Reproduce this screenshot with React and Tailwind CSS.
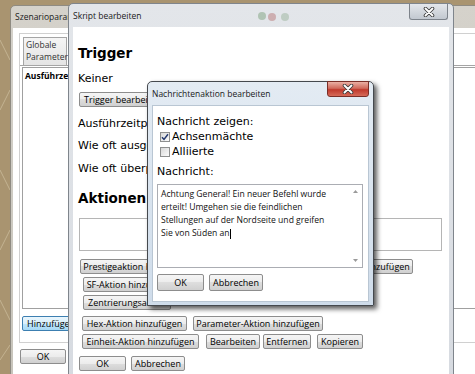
import React from 'react';

const ui = "font-['Open_Sans',sans-serif]";
const lbl = "font-['DejaVu_Sans',sans-serif]";

const Btn = ({ children, className = '', focused, tall }) => (
    <div
        className={`${tall ? 'h-[17px]' : 'h-[15px]'} shrink-0 flex items-center justify-center rounded-[2px] border ${focused
            ? 'border-[#3c7fb1] bg-[linear-gradient(#eaf6fd,#d9f0fc_50%,#bee6fd_50%,#a7d9f5)]'
            : 'border-[#8d8d8d] bg-[linear-gradient(#f5f5f5,#ececec_50%,#dedede_50%,#d0d0d0)]'
            } ${ui} text-[9px] text-black leading-none whitespace-nowrap overflow-hidden ${className}`}
    >
        {children}
    </div>
);

const Check = ({ checked }) => (
    <span className="w-[10px] h-[10px] shrink-0 border border-[#8e8f8f] bg-[linear-gradient(135deg,#d8d8d8,#fbfbfb)] flex items-center justify-center">
        {checked && (
            <svg width="8" height="8" viewBox="0 0 8 8">
                <path d="M1 4.2 L3 6.4 L7 1.2" stroke="#24386e" strokeWidth="1.5" fill="none" />
            </svg>
        )}
    </span>
);

const CloseX = () => (
    <svg width="12" height="10" viewBox="0 0 12 10">
        <path d="M2.5 1.5 L9.5 8.5 M9.5 1.5 L2.5 8.5" stroke="#3a3a3a" strokeWidth="3.6" strokeLinecap="round" />
        <path d="M2.5 1.5 L9.5 8.5 M9.5 1.5 L2.5 8.5" stroke="#ffffff" strokeWidth="1.9" strokeLinecap="round" />
    </svg>
);

export default function App() {
    return (
        <div className="relative w-[475px] h-[374px] overflow-hidden bg-[#a99470]">
            {/* Desktop pattern */}
            <svg className="absolute inset-0" width="475" height="374">
                <path d="M0 40 L10 60 M0 110 L10 90 M0 170 L10 190 M0 250 L10 230 M0 300 L10 320 M0 360 L10 345" stroke="#d6c8a8" strokeWidth="1" opacity="0.6" />
            </svg>

            {/* Szenarioparameter window */}
            <div className="absolute left-[10px] top-[5px] w-[490px] h-[400px] flex flex-col rounded-tl-[5px] border border-[#8f8b82] bg-[linear-gradient(#d5d2cb,#c6c3ba)] pl-[2px]">
                <div className={`h-[22px] flex items-center pl-[2px] ${ui} text-[8.5px] text-[#1a1a1a]`}>Szenarioparameter</div>
                <div className="flex-1 bg-white flex flex-col pl-[6px]">
                    <div className="mt-[5px] h-[310px] border border-[#d0d0d0] flex flex-col">
                        <div className="flex pl-[3px] pt-[3px]">
                            <div className={`w-[44px] h-[28px] border border-b-0 border-[#a5a5a5] bg-[linear-gradient(#f5f5f5,#e4e4e4)] px-[2px] pt-[1px] ${ui} text-[8.5px] leading-[12px] text-[#333]`}>
                                Globale Parameter
                            </div>
                        </div>
                        <div className="flex-1 border-t border-[#a5a5a5] flex flex-col pl-[2px]">
                            <div className="mt-[1px] h-[242px] border border-[#a0a0a0] px-[2px] pt-[2px]">
                                <div className={`${ui} font-bold text-[8.5px] leading-[12px] text-black`}>Ausführzeitpunkt</div>
                            </div>
                            <div className="mt-[7px] flex">
                                <Btn focused className="w-[62px] justify-start pl-[4px]">Hinzufügen</Btn>
                            </div>
                        </div>
                    </div>
                    <div className="mt-[6px] flex">
                        <Btn className="w-[46px] ml-[1px]">OK</Btn>
                    </div>
                </div>
            </div>

            {/* Skript bearbeiten window */}
            <div className="absolute left-[68px] top-[3px] w-[386px] h-[390px] flex flex-col rounded-t-[5px] border border-[#7f858c] bg-[linear-gradient(#e3e6ea,#d6dae0)] px-[4px]">
                <div className="h-[23px] shrink-0 flex items-start justify-between relative">
                    <div className={`mt-[6px] ${ui} text-[8.5px] text-[#1a1a1a]`}>Skript bearbeiten</div>
                    <div className="absolute left-[185px] top-[8px] w-[8px] h-[8px] rounded-full bg-[#7da27d] opacity-50" />
                    <div className="absolute left-[195px] top-[9px] w-[8px] h-[8px] rounded-full bg-[#b87878] opacity-50" />
                    <div className="absolute left-[208px] top-[9px] w-[8px] h-[8px] rounded-full bg-[#8aa88a] opacity-40" />
                    <div className="w-[39px] h-[16px] mr-[1px] rounded-b-[3px] border border-t-0 border-[#7d838b] bg-[linear-gradient(#e4e7eb,#c2c8d0)] flex items-center justify-center">
                        <CloseX />
                    </div>
                </div>
                <div className={`flex-1 bg-white flex flex-col pl-[5px] ${lbl} text-black`}>
                    <div className="mt-[18px] h-[16px] leading-[16px] text-[13.5px] font-bold">Trigger</div>
                    <div className="mt-[11px] h-[14px] leading-[14px] text-[11px]">Keiner</div>
                    <div className="mt-[6px] flex">
                        <Btn className="w-[110px] ml-[1px] justify-start pl-[4px]">Trigger bearbeiten</Btn>
                    </div>
                    <div className="mt-[10px] h-[14px] leading-[14px] text-[11px]">Ausführzeitpunkt: Zugbeginn</div>
                    <div className="mt-[8px] h-[14px] leading-[14px] text-[11px]">Wie oft ausgeführt: Einmal</div>
                    <div className="mt-[9px] h-[14px] leading-[14px] text-[11px]">Wie oft überprüft: Einmal</div>
                    <div className="mt-[14px] h-[16px] leading-[16px] text-[13.5px] font-bold">Aktionen</div>
                    <div className="mt-[12px] ml-[1px] w-[363px] h-[33px] shrink-0 border border-[#b5b5b5]" />
                    <div className="mt-[8px] ml-[2px] flex gap-[4px]">
                        <Btn className="w-[116px]">Prestigeaktion hinzufügen</Btn>
                        <Btn className="w-[110px]">Textaktion hinzufügen</Btn>
                        <Btn className="w-[99px]">Siegaktion hinzufügen</Btn>
                    </div>
                    <div className="mt-[3px] ml-[5px] flex">
                        <Btn className="w-[96px]">SF-Aktion hinzufügen</Btn>
                    </div>
                    <div className="mt-[3px] ml-[5px] flex">
                        <Btn className="w-[88px] justify-start pl-[4px]">Zentrierungsaktion</Btn>
                    </div>
                    <div className="mt-[6px] ml-[4px] flex gap-[6px]">
                        <Btn className="w-[105px]">Hex-Aktion hinzufügen</Btn>
                        <Btn className="w-[130px]">Parameter-Aktion hinzufügen</Btn>
                    </div>
                    <div className="mt-[3px] ml-[4px] flex">
                        <Btn className="w-[117px]">Einheit-Aktion hinzufügen</Btn>
                        <Btn className="w-[54px] ml-[7px]">Bearbeiten</Btn>
                        <Btn className="w-[48px] ml-[3px]">Entfernen</Btn>
                        <Btn className="w-[46px] ml-[6px]">Kopieren</Btn>
                    </div>
                    <div className="mt-[7px] ml-[1px] flex gap-[5px]">
                        <Btn className="w-[47px]">OK</Btn>
                        <Btn className="w-[54px]">Abbrechen</Btn>
                    </div>
                </div>
            </div>

            {/* Nachrichtenaktion bearbeiten dialog */}
            <div className="absolute z-10 left-[147px] top-[81px] bottom-[68px] w-[227px] flex flex-col rounded-t-[5px] border border-[#45494e] bg-[linear-gradient(#e3ebf3,#cfdcea)] px-[4px] shadow-[3px_3px_5px_rgba(0,0,0,0.65)]">
                <div className="h-[23px] shrink-0 flex items-start justify-between">
                    <div className={`mt-[6px] ${ui} text-[8.5px] text-[#1a1a1a]`}>Nachrichtenaktion bearbeiten</div>
                    <div className="w-[42px] h-[16px] mt-[-1px] rounded-b-[3px] border border-[#7a2e27] bg-[linear-gradient(#eab0a4,#d06a5c_45%,#c0392c_55%,#d66a58)] flex items-center justify-center">
                        <CloseX />
                    </div>
                </div>
                <div className={`flex-1 bg-white border border-[#b9c6d3] flex flex-col pl-[4px] ${lbl} text-[11px] text-black`}>
                    <div className="mt-[9px] h-[14px] shrink-0 leading-[14px]">Nachricht zeigen:</div>
                    <div className="mt-[1px] h-[14px] shrink-0 flex items-center gap-[2px] pl-[3px]">
                        <Check checked />
                        <span className="leading-[14px]">Achsenmächte</span>
                    </div>
                    <div className="mt-[1px] h-[14px] shrink-0 flex items-center gap-[2px] pl-[3px]">
                        <Check />
                        <span className="leading-[14px]">Alliierte</span>
                    </div>
                    <div className="mt-[6px] h-[14px] shrink-0 leading-[14px]">Nachricht:</div>
                    <div className="mt-[5px] w-[206px] h-[84px] shrink-0 border border-[#abadb3] flex">
                        <div className={`flex-1 pl-[3px] pt-[3px] ${ui} text-[8.6px] leading-[13px] text-[#111]`}>
                            <div>Achtung General! Ein neuer Befehl wurde</div>
                            <div>erteilt! Umgehen sie die feindlichen</div>
                            <div>Stellungen auf der Nordseite und greifen</div>
                            <div className="flex items-center">Sie von Süden an<span className="inline-block w-[1px] h-[10px] bg-black" /></div>
                        </div>
                        <div className="w-[13px] flex flex-col justify-between items-center py-[5px]">
                            <svg width="5" height="3" viewBox="0 0 5 3"><path d="M0 3 L2.5 0 L5 3 Z" fill="#9a9a9a" /></svg>
                            <svg width="5" height="3" viewBox="0 0 5 3"><path d="M0 0 L2.5 3 L5 0 Z" fill="#9a9a9a" /></svg>
                        </div>
                    </div>
                    <div className="mt-[6px] flex gap-[5px]">
                        <Btn tall className="w-[47px]">OK</Btn>
                        <Btn tall className="w-[54px]">Abbrechen</Btn>
                    </div>
                    <div className="h-[10px] shrink-0" />
                </div>
                <div className="h-[4px] shrink-0" />
            </div>
        </div>
    );
}
